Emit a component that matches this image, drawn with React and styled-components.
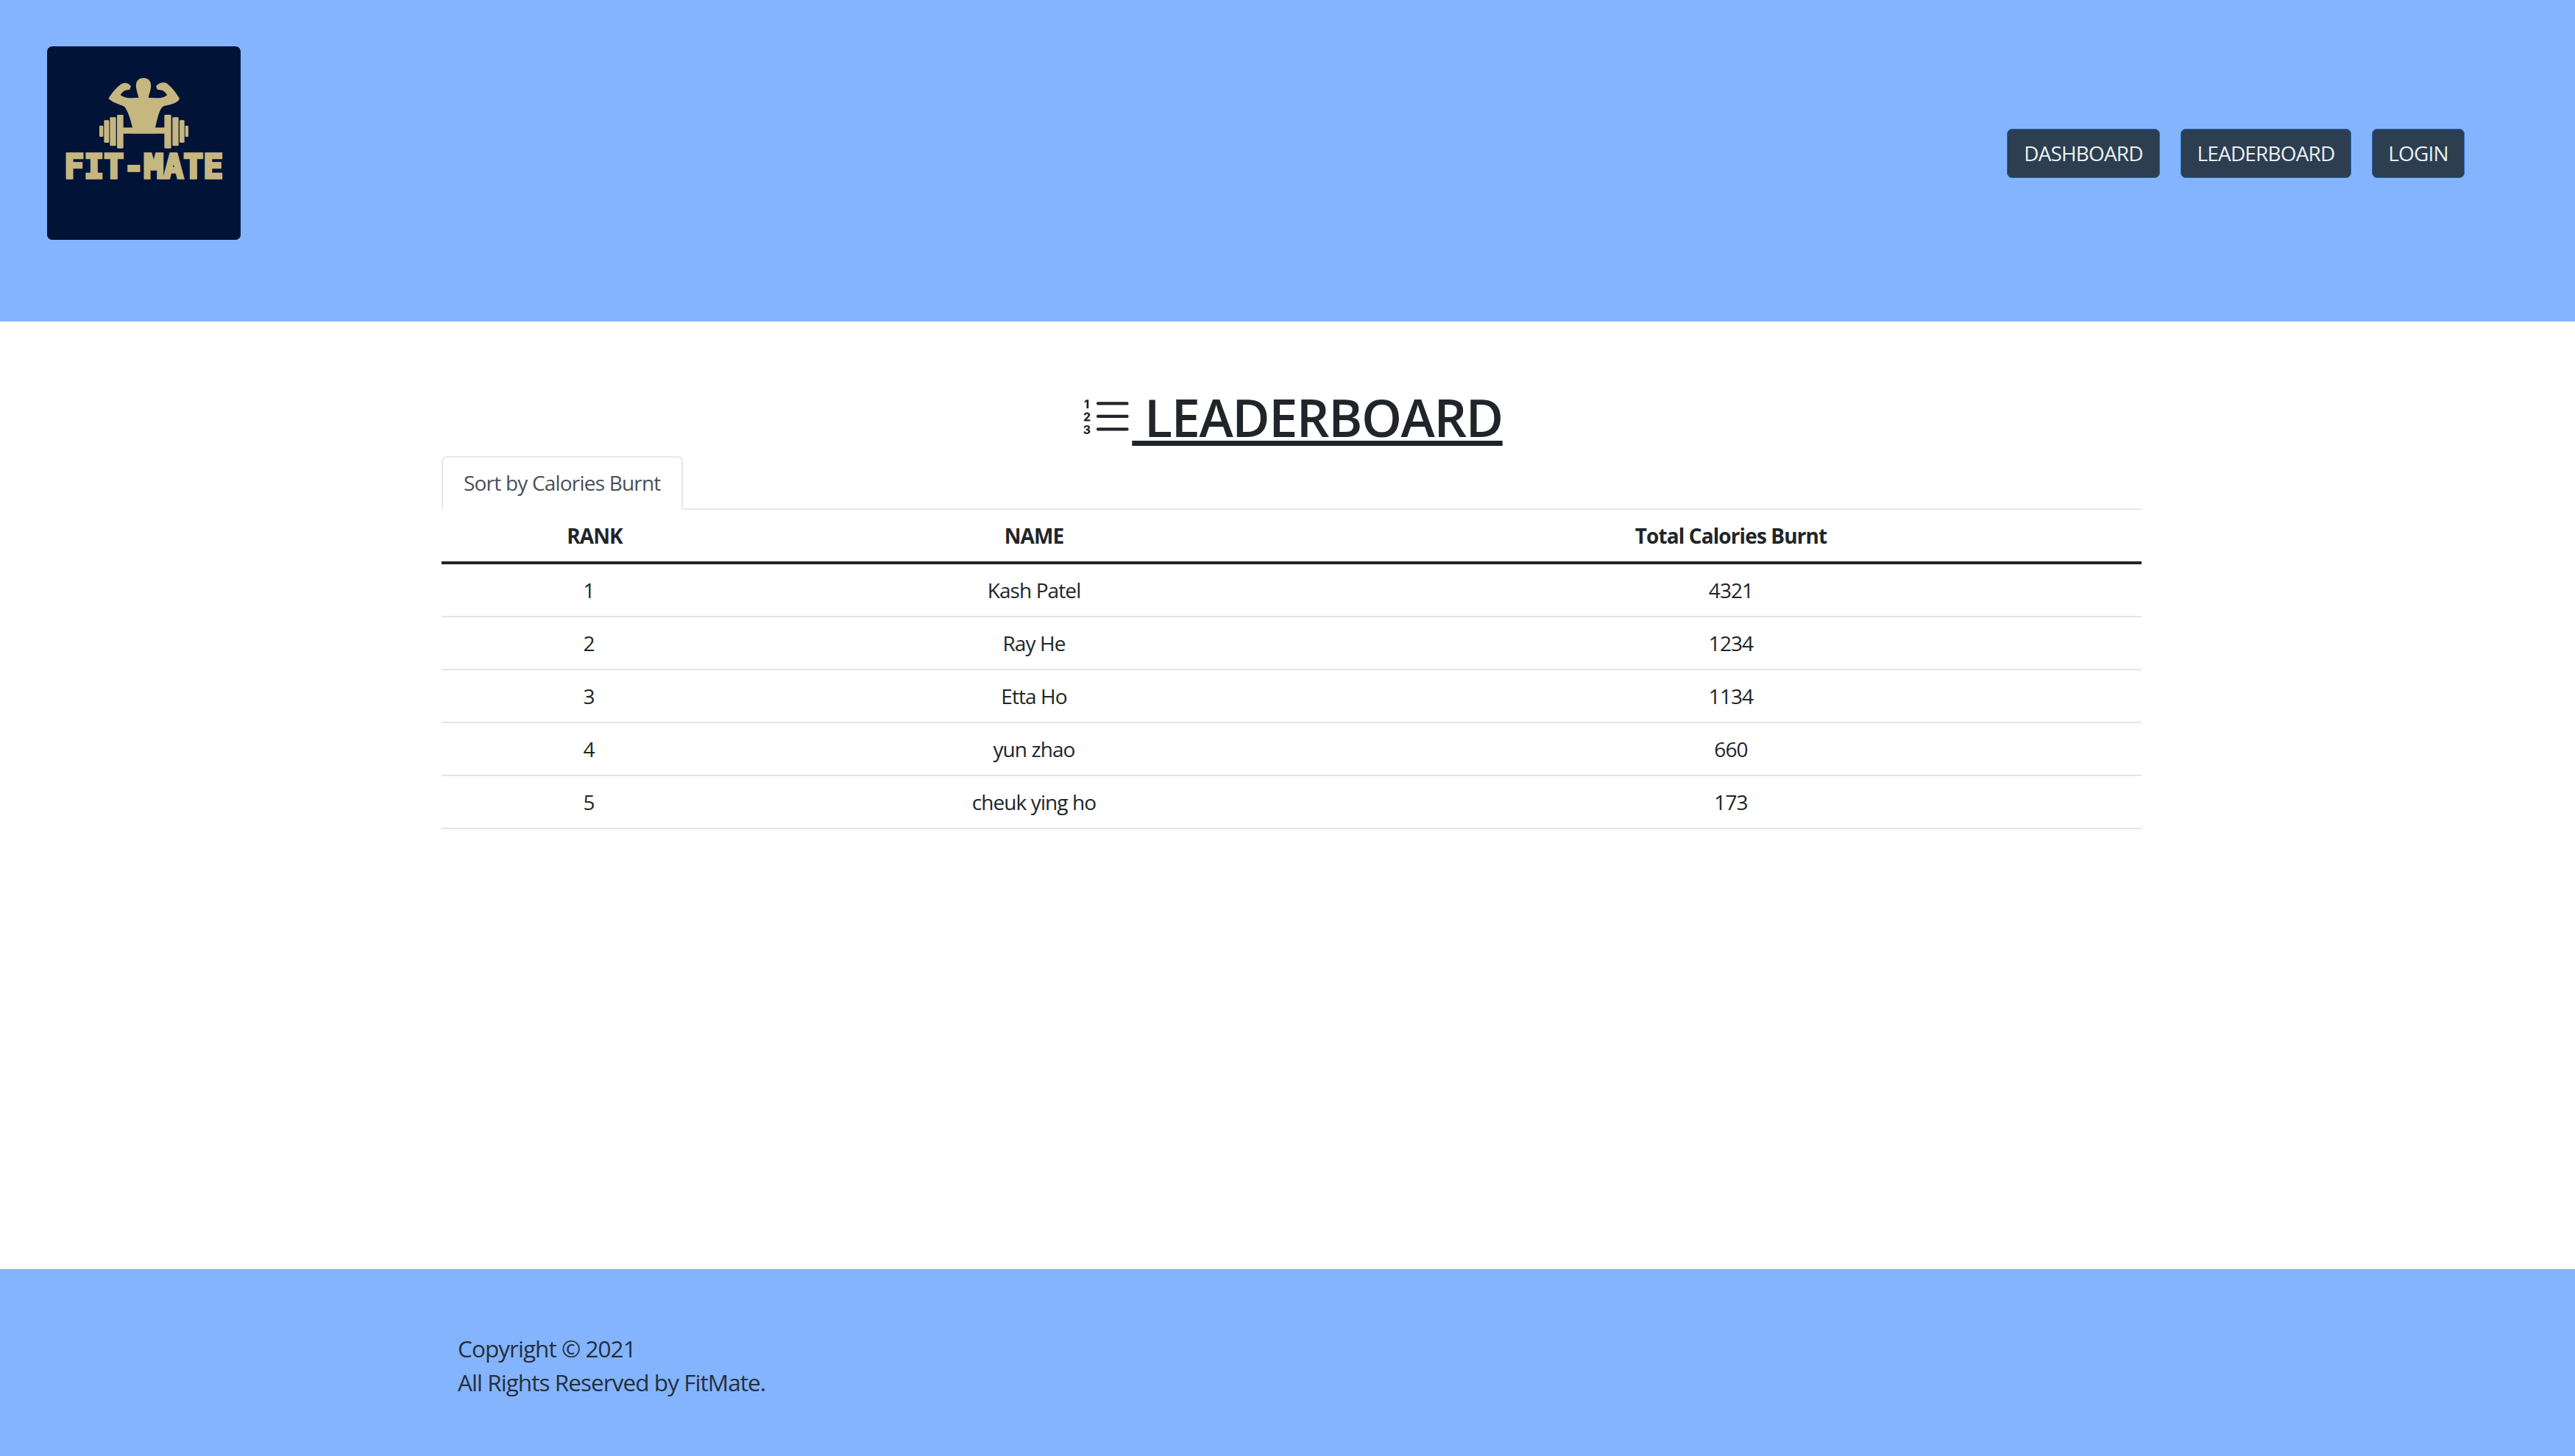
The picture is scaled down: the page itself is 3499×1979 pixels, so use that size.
import React from "react";
import styled, { createGlobalStyle } from "styled-components";
import { BsListOl } from "react-icons/bs";

const Global = createGlobalStyle`
  html, body { margin: 0; padding: 0; }
  body {
    font-family: "Open Sans", "Noto Sans", sans-serif;
    font-size: 28px;
    line-height: 1.5;
    color: #212529;
    background: #fff;
  }
`;

const Page = styled.div`
  min-height: 1979px;
  display: flex;
  flex-direction: column;
`;

const Header = styled.header`
  height: 437px;
  box-sizing: border-box;
  background: #85b4fe;
  padding: 63px 150px 0 64px;
  display: flex;
  justify-content: space-between;
  align-items: flex-start;
`;

const LogoBox = styled.div`
  width: 263px;
  height: 263px;
  border-radius: 7px;
  overflow: hidden;
  background: #021338;
`;

const LogoSvg = styled.svg`
  display: block;
  width: 100%;
  height: 100%;
`;

const Nav = styled.nav`
  display: flex;
  gap: 28px;
  margin-top: 112px;
`;

const NavButton = styled.a`
  box-sizing: border-box;
  height: 66.5px;
  padding: 10.5px 21px;
  border: 1.75px solid #2767b8;
  border-radius: 7px;
  background: #2c3e50;
  color: #ecf0f1;
  font-size: 28px;
  line-height: 42px;
  letter-spacing: -0.85px;
  display: flex;
  align-items: center;
  justify-content: center;
  width: ${(p) => p.$w}px;
`;

const Main = styled.main`
  flex: 1;
  width: 2310px;
  margin-left: 600px;
  padding-top: 88px;
`;

const Title = styled.h1`
  margin: 0 0 11px;
  font-size: 70px;
  font-weight: 600;
  line-height: 84px;
  text-align: center;
  letter-spacing: -1.4px;
  text-decoration: underline;
  text-decoration-thickness: 7px;
  text-underline-offset: 5px;
  text-decoration-skip-ink: none;
  svg {
    vertical-align: -0.125em;
  }
`;

const Tabs = styled.div`
  display: flex;
  border-bottom: 2px solid #e6e8eb;
`;

const Tab = styled.div`
  box-sizing: border-box;
  height: 73px;
  margin-bottom: -2px;
  padding: 13px 28px;
  border: 2px solid #e6e8eb;
  border-bottom-color: #fff;
  border-radius: 7px 7px 0 0;
  color: #495057;
  line-height: 42px;
  letter-spacing: -0.8px;
`;

const Table = styled.table`
  width: 100%;
  table-layout: fixed;
  border-collapse: separate;
  border-spacing: 0;
`;

const Th = styled.th`
  box-sizing: border-box;
  width: ${(p) => p.$w}px;
  padding: 14px;
  line-height: 42px;
  font-weight: 700;
  text-align: center;
  letter-spacing: -0.9px;
  border-bottom: 4px solid #212529;
`;

const Td = styled.td`
  padding: 14px;
  padding-right: ${(p) => (p.$rank ? 30 : 14)}px;
  line-height: 42px;
  text-align: center;
  letter-spacing: -0.9px;
  border-bottom: 2px solid #e3e6e9;
`;

const Footer = styled.footer`
  height: 254px;
  box-sizing: border-box;
  background: #85b4fe;
  padding: 85px 0 0 622px;
  color: #22303f;
  font-size: 31.5px;
  line-height: 46px;
  letter-spacing: -0.95px;
`;

const FooterLine = styled.div``;

const GOLD = "#c6b680";
const plates = [
  [357, 348, 26, 137],
  [328, 358, 25, 117],
  [304, 370, 21, 92],
  [285, 392, 16, 46],
  [550, 348, 28, 137],
  [583, 358, 25, 117],
  [612, 370, 20, 92],
  [635, 392, 13, 46],
];

const Logo = () => (
  <LogoSvg viewBox="72 69 789 789" aria-label="Fit-Mate logo">
    <path
      fill={GOLD}
      d="M465 198C488 198 498 214 495 238C493 252 488 264 485 278L520 280C540 280 555 274 561 268C556 256 542 244 522 246L516 232C525 218 550 212 563 222C585 240 600 262 612 282C606 296 590 304 550 312C535 316 528 340 520 370L513 400L513 424L420 424L420 400C412 370 405 340 388 316C378 308 340 300 322 282C335 260 350 240 372 224C385 214 405 216 414 232L408 246C390 244 376 256 371 268C380 275 395 280 412 280L445 278C442 264 437 252 435 238C432 214 442 198 465 198Z"
    />
    <rect x="380" y="400" width="172" height="25" fill={GOLD} />
    {plates.map(([x, y, w, h]) => (
      <rect key={x} x={x} y={y} width={w} height={h} rx="4" fill={GOLD} />
    ))}
    <text
      x="142"
      y="606"
      fontFamily="'DejaVu Sans Mono', monospace"
      fontWeight="700"
      fontSize="132"
      fill={GOLD}
      stroke={GOLD}
      strokeWidth="10"
      textLength="648"
      lengthAdjust="spacingAndGlyphs"
    >
      FIT-MATE
    </text>
  </LogoSvg>
);

const rows = [
  [1, "Kash Patel", 4321],
  [2, "Ray He", 1234],
  [3, "Etta Ho", 1134],
  [4, "yun zhao", 660],
  [5, "cheuk ying ho", 173],
];

export default function App() {
  return (
    <Page>
      <Global />
      <Header>
        <LogoBox>
          <Logo />
        </LogoBox>
        <Nav>
          <NavButton $w={208}>DASHBOARD</NavButton>
          <NavButton $w={232}>LEADERBOARD</NavButton>
          <NavButton $w={126}>LOGIN</NavButton>
        </Nav>
      </Header>
      <Main>
        <Title>
          <BsListOl /> LEADERBOARD
        </Title>
        <Tabs>
          <Tab>Sort by Calories Burnt</Tab>
        </Tabs>
        <Table>
          <thead>
            <tr>
              <Th $w={416}>RANK</Th>
              <Th $w={778}>NAME</Th>
              <Th>Total Calories Burnt</Th>
            </tr>
          </thead>
          <tbody>
            {rows.map(([rank, name, cal]) => (
              <tr key={rank}>
                <Td $rank>{rank}</Td>
                <Td>{name}</Td>
                <Td>{cal}</Td>
              </tr>
            ))}
          </tbody>
        </Table>
      </Main>
      <Footer>
        <FooterLine>Copyright © 2021</FooterLine>
        <FooterLine>All Rights Reserved by FitMate.</FooterLine>
      </Footer>
    </Page>
  );
}
